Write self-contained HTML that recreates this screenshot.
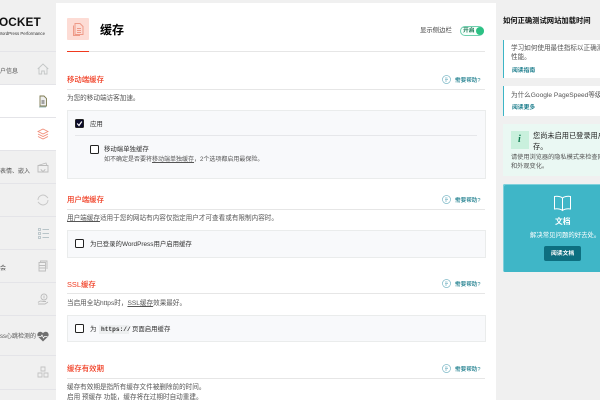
<!DOCTYPE html>
<html lang="zh"><head><meta charset="utf-8"><style>
html,body{margin:0;padding:0}
body{width:600px;height:400px;overflow:hidden;background:#f0f0f0;position:relative;font-family:"Liberation Sans","Noto Sans CJK SC",sans-serif}
#w{position:absolute;left:0;top:0;width:600px;height:400px;overflow:hidden;filter:blur(.2px)}
.a{position:absolute}
.t{position:absolute;white-space:nowrap;line-height:10px}
.sec{font-size:7.400px;color:#f0391e;left:67px;font-weight:500}
.d{font-size:6.600px;color:#555;left:67px}
.l{position:absolute;left:67px;width:418px;height:1px;background:#e6e6e6}
.box{position:absolute;left:67px;width:417px;background:#f8f9fb;border:1px solid #eaecec}
.cb{position:absolute;width:6.500px;height:6.500px;border:1px solid #222;border-radius:1.500px;background:#fff}
.h{font-size:5.600px;color:#1c7d8c;left:455px;font-weight:500}
.n{position:absolute;left:0;width:56px;height:1px;background:#e4e4e8}
svg{position:absolute;fill:none}
</style></head><body><div id="w">
<div class="a" style="left:0;top:84px;width:56px;height:66px;background:#fff"></div>
<div class="a" style="left:56px;top:3px;width:440px;height:397px;background:#fff"></div>
<div class="a" style="left:496px;top:0;width:104px;height:400px;background:#f0f0f0"></div>

<div class="t" style="left:-1px;top:17px;font-size:11.800px;font-weight:bold;color:#111;letter-spacing:.1px">OCKET</div>
<div class="t" style="left:-2px;top:28.500px;font-size:4.300px;color:#333">WordPress Performance</div>
<div class="n" style="top:51px"></div><div class="n" style="top:84px"></div><div class="n" style="top:117px"></div><div class="n" style="top:150px"></div><div class="n" style="top:183px"></div><div class="n" style="top:216px"></div><div class="n" style="top:249px"></div><div class="n" style="top:282px"></div><div class="n" style="top:315px"></div><div class="n" style="top:355px"></div><div class="n" style="top:389px"></div>
<div class="t" style="left:0;top:67px;font-size:6px;color:#555">户信息</div>
<div class="t" style="left:0;top:167px;font-size:6px;color:#555">表情、嵌入</div>
<div class="t" style="left:0;top:264px;font-size:6px;color:#555">会</div>
<div class="t" style="left:0;top:332px;font-size:6px;color:#555">ss心跳检测的</div>

<svg style="left:37px;top:63px" width="12" height="12" viewBox="0 0 12 12" stroke="#c3c6c6" stroke-width=".9"><path d="M.7 6 6 1l5.300 5M2 5v6h2.700V8h2.600v3H10V5"/></svg>
<svg style="left:38px;top:95px" width="10" height="13" viewBox="0 0 10 13" stroke="#7d7a50" stroke-width=".9"><path d="M2 1h4l2.500 2.500V11H2z" fill="#eee"/><path d="M3.500 6h3M3.500 8h3" stroke="#555"/><path d="M1 12h7" stroke="#8fb0b0"/></svg>
<svg style="left:37px;top:128px" width="12" height="12" viewBox="0 0 12 12" stroke="#f08a75" stroke-width=".8"><path d="M6 1 11 3.500 6 6 1 3.500zM1 6l5 2.500L11 6M1 8.500 6 11l5-2.500"/></svg>
<svg style="left:37px;top:162px" width="12" height="11" viewBox="0 0 12 11" stroke="#bcbcbc" stroke-width=".9"><path d="M1 3.500 9 1l1 2.500M1 3.500h10V10H1zM4 7a2 2 0 0 0 4 0"/></svg>
<svg style="left:37px;top:194px" width="12" height="12" viewBox="0 0 12 12" stroke="#c6c6c6" stroke-width=".9"><path d="M1 6a5 5 0 0 1 8.500-3.500L11 4M11 6a5 5 0 0 1-8.500 3.500L1 8"/></svg>
<svg style="left:38px;top:228px" width="11" height="11" viewBox="0 0 11 11" stroke="#b8c4c8" stroke-width=".9"><path d="M4.500 1.500H11M4.500 5.500H11M4.500 9.500H11"/><rect x=".5" y=".5" width="2" height="2"/><rect x=".5" y="4.500" width="2" height="2"/><rect x=".5" y="8.500" width="2" height="2"/></svg>
<svg style="left:38px;top:260px" width="10" height="12" viewBox="0 0 10 12" stroke="#bdbdbd" stroke-width=".9"><path d="M1 2.500h6.500V11H1zM2.500 2.500V1H9v8M1 5.500h6.500M1 8h6.500"/></svg>
<svg style="left:37px;top:293px" width="12" height="12" viewBox="0 0 12 12" stroke="#bcbcbc" stroke-width=".9"><circle cx="7" cy="4" r="3"/><path d="M7 2.500V5.500M1 9.500c2-2 3-1.500 5-1h3M1 11h7l3-2"/></svg>
<svg style="left:37px;top:331px" width="12" height="11" viewBox="0 0 12 11"><path d="M6 10.500.9 5.500C-.5 3.500 1 .8 3.200.8 4.500.8 5.400 1.500 6 2.300 6.600 1.500 7.500.8 8.800.8c2.200 0 3.700 2.700 2.300 4.700z" fill="#6f6f6f"/><path d="M1 5.500h3l1-1.500 1.500 3 1-1.500h3" stroke="#fff" stroke-width=".7"/></svg>
<svg style="left:37px;top:366px" width="12" height="12" viewBox="0 0 12 12" stroke="#c2c2c2" stroke-width=".9"><path d="M4 1h4v4H4zM1 7h4v4H1zM7 7h4v4H7z"/></svg>

<div class="a" style="left:67px;top:18px;width:22px;height:22px;background:#fddcd5;border-radius:1px"></div>
<svg style="left:72px;top:22px" width="13" height="14" viewBox="0 0 13 14" stroke="#ee9a88" stroke-width="1"><path d="M3 1.500h5L11 4.500V12.500H3zM1.500 3.500V13.500H8"/><path d="M5 6.500h4M5 8.500h4M5 10.500h4"/></svg>
<div class="t" style="left:100px;top:24.500px;font-size:12px;color:#000;font-weight:600">缓存</div>
<div class="t" style="left:420px;top:26px;font-size:6.400px;color:#444">显示侧边栏</div>
<div class="a" style="left:460px;top:25.500px;width:24px;height:10px;border:1px solid #6fd0ae;border-radius:6px;background:#f6fffb;box-sizing:border-box"></div>
<div class="a" style="left:476px;top:27px;width:8px;height:8px;border-radius:50%;background:#2cc184"></div>
<div class="t" style="left:463px;top:26px;font-size:5.800px;color:#197a55;font-weight:bold">开启</div>
<div class="l" style="top:51px"></div>
<div class="a" style="left:67px;top:51px;width:22px;height:1px;background:#f0391e"></div>

<div class="t sec" style="top:75px">移动端缓存</div><div class="l" style="top:89px"></div>
<svg style="left:442px;top:74.500px" width="9" height="9" viewBox="0 0 9 9" stroke="#7cb8c6" stroke-width=".7"><circle cx="4.500" cy="4.500" r="4"/><path d="M3 3h2.500M3 4.500h3M3 6h2"/></svg>
<div class="t h" style="top:75.500px">需要帮助?</div>
<div class="t d" style="top:94px">为您的移动端访客加速。</div>
<div class="box" style="top:110px;height:67px"></div>
<div class="cb" style="left:75px;top:119px;background:#0c0c2c"></div>
<svg style="left:76px;top:120px" width="7" height="7" viewBox="0 0 7 7" stroke="#fff" stroke-width="1.200"><path d="M1.200 3.500 3 5.500 5.800 1.500"/></svg>
<div class="t" style="left:90px;top:119.500px;font-size:6.400px;color:#333">应用</div>
<div class="a" style="left:75px;top:135px;width:402px;height:1px;background:#e6e7ea"></div>
<div class="cb" style="left:90px;top:145px"></div>
<div class="t" style="left:104px;top:144.500px;font-size:6.400px;color:#333">移动端单独缓存</div>
<div class="t d" style="left:104px;top:154.500px;font-size:6px">如不确定是否要将<u>移动端单独缓存</u>，2个选项都启用最保险。</div>

<div class="t sec" style="top:195px">用户端缓存</div><div class="l" style="top:209px"></div>
<svg style="left:442px;top:194.500px" width="9" height="9" viewBox="0 0 9 9" stroke="#7cb8c6" stroke-width=".7"><circle cx="4.500" cy="4.500" r="4"/><path d="M3 3h2.500M3 4.500h3M3 6h2"/></svg>
<div class="t h" style="top:195.500px">需要帮助?</div>
<div class="t d" style="top:214px"><u>用户端缓存</u>适用于您的网站有内容仅指定用户才可查看或有限制内容时。</div>
<div class="box" style="top:230px;height:26px"></div>
<div class="cb" style="left:75px;top:239px"></div>
<div class="t" style="left:90px;top:239.500px;font-size:6.400px;color:#333">为已登录的WordPress用户启用缓存</div>

<div class="t sec" style="top:280px">SSL缓存</div><div class="l" style="top:293px"></div>
<svg style="left:442px;top:279px" width="9" height="9" viewBox="0 0 9 9" stroke="#7cb8c6" stroke-width=".7"><circle cx="4.500" cy="4.500" r="4"/><path d="M3 3h2.500M3 4.500h3M3 6h2"/></svg>
<div class="t h" style="top:280px">需要帮助?</div>
<div class="t d" style="top:299px">当启用全站https时，<u>SSL缓存</u>效果最好。</div>
<div class="box" style="top:315px;height:25px"></div>
<div class="cb" style="left:75px;top:324px"></div>
<div class="t" style="left:90px;top:324.500px;font-size:6.400px;color:#333">为</div>
<div class="a" style="left:99px;top:325px;width:30px;height:9px;background:#edeff0"></div>
<div class="t" style="left:101px;top:324.500px;font:bold 6.200px/10px 'Liberation Mono',monospace;color:#333">https://</div>
<div class="t" style="left:132px;top:324.500px;font-size:6.400px;color:#333">页面启用缓存</div>

<div class="t sec" style="top:364px">缓存有效期</div><div class="l" style="top:378px"></div>
<svg style="left:442px;top:363.500px" width="9" height="9" viewBox="0 0 9 9" stroke="#7cb8c6" stroke-width=".7"><circle cx="4.500" cy="4.500" r="4"/><path d="M3 3h2.500M3 4.500h3M3 6h2"/></svg>
<div class="t h" style="top:364.500px">需要帮助?</div>
<div class="t d" style="top:383px">缓存有效期是指所有缓存文件被删除前的时间。</div>
<div class="t d" style="top:393px">启用 <u>预缓存</u> 功能，缓存将在过期时自动重建。</div>

<div class="t" style="left:503px;top:15.500px;font-size:7.300px;color:#111;font-weight:bold">如何正确测试网站加载时间</div>

<div class="a" style="left:503px;top:40px;width:97px;height:38px;background:#fff;border-left:1.500px solid #3cb5c6;box-sizing:border-box"></div>
<div class="t d" style="left:511px;top:44px">学习如何使用最佳指标以正确测试</div>
<div class="t d" style="left:511px;top:53px">性能。</div>
<div class="t" style="left:512px;top:65.500px;font-size:5.800px;color:#1c7d8c;font-weight:bold">阅读指南</div>

<div class="a" style="left:503px;top:86px;width:97px;height:30px;background:#fff;border-left:1.500px solid #3cb5c6;box-sizing:border-box"></div>
<div class="t d" style="left:511px;top:91px">为什么Google PageSpeed等级不是</div>
<div class="t" style="left:512px;top:103px;font-size:5.800px;color:#1c7d8c;font-weight:bold">阅读更多</div>

<div class="a" style="left:503px;top:124px;width:97px;height:52px;background:#eaf8f3"></div>
<div class="a" style="left:511px;top:131px;width:18px;height:18px;background:#c9f0dd"></div>
<div class="t" style="left:518px;top:135px;font:italic bold 10px/10px 'Liberation Serif',serif;color:#0e7a50">i</div>
<div class="t" style="left:533px;top:131px;font-size:7.200px;color:#222">您尚未启用已登录用户缓</div>
<div class="t" style="left:533px;top:142px;font-size:7.200px;color:#222">存。</div>
<div class="t d" style="left:511px;top:153px;font-size:6.200px">请使用浏览器的隐私模式来检查网站</div>
<div class="t d" style="left:511px;top:162px;font-size:6.200px">和外观变化。</div>

<div class="a" style="left:503px;top:184px;width:97px;height:88px;background:#3fb6c7;border-radius:2px 0 0 2px;box-shadow:inset 1px 1px 0 #7fd0db"></div>
<svg style="left:553px;top:195px" width="19" height="17" viewBox="0 0 19 17" stroke="#fff" stroke-width="1"><path d="M9.500 3C8 1.500 4.500 1 1.500 1.500V14c3-.5 6.500 0 8 1.500 1.500-1.500 5-2 8-1.500V1.500C14.500 1 11 1.500 9.500 3zM9.500 3V15.500"/></svg>
<div class="t" style="left:555px;top:216.500px;font-size:7.800px;color:#fff;font-weight:bold">文档</div>
<div class="t" style="left:530px;top:231px;font-size:6.400px;color:#fff">解决常见问题的好去处。</div>
<div class="a" style="left:544px;top:246px;width:37px;height:15px;background:#0d6f80;border-radius:2px"></div>
<div class="t" style="left:551px;top:249px;font-size:5.800px;color:#fff;font-weight:bold">阅读文档</div>
</div></body></html>
